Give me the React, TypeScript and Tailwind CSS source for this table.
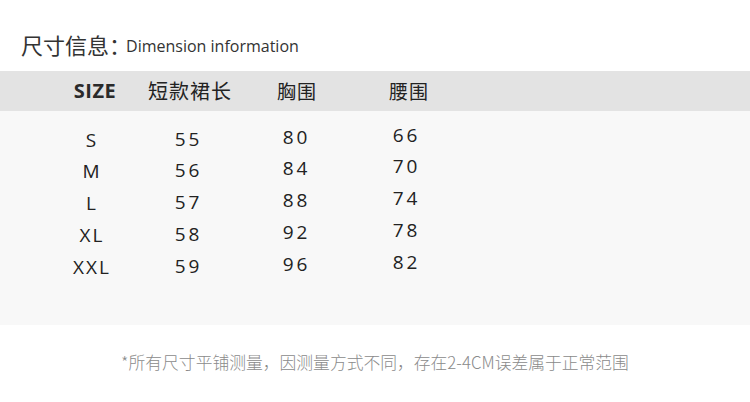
export default function App() {
  const sizes = ["S", "M", "L", "XL", "XXL"];
  const lens = ["55", "56", "57", "58", "59"];
  const chest = ["80", "84", "88", "92", "96"];
  const waist = ["66", "70", "74", "78", "82"];
  const cjk = { fontFamily: '"Noto Sans CJK SC", "Open Sans", sans-serif' };
  const latin = { fontFamily: '"Open Sans", "Noto Sans CJK SC", sans-serif' };
  return (
    <div className="w-[750px] h-[402px] bg-white overflow-hidden text-[#222]">
      <div className="h-[71px] flex items-end pl-[21px] pb-[16px]">
        <span className="text-[22px] leading-none text-[#333]" style={cjk}>尺寸信息：</span>
        <span className="text-[16px] leading-none text-[#333] -ml-[5px] pb-[1px]" style={latin}>Dimension information</span>
      </div>
      <div className="h-[40px] bg-[#e3e3e3] flex items-center pl-[55px]">
        <div className="w-[80px] text-center text-[20px] font-bold text-[#2a2a2a] tracking-[0.5px]" style={latin}>SIZE</div>
        <div className="w-[110px] text-center text-[20px] tracking-[1px]" style={cjk}>短款裙长</div>
        <div className="w-[104px] text-center text-[19px] tracking-[1px]" style={cjk}>胸围</div>
        <div className="w-[120px] text-center text-[19px] tracking-[1px]" style={cjk}>腰围</div>
      </div>
      <div className="h-[214px] bg-[#f8f8f8] flex pl-[51px] text-[19px]" style={latin}>
        <div className="w-[80px] flex flex-col pt-[13px]">
          {sizes.map((s) => (
            <div key={s} className="h-[31.75px] flex items-center justify-center tracking-[2px] pl-[2px]">{s}</div>
          ))}
        </div>
        <div className="w-[112px] flex flex-col pt-[12px]">
          {lens.map((s) => (
            <div key={s} className="h-[31.75px] flex items-center justify-center tracking-[3px] pl-[3px]">{s}</div>
          ))}
        </div>
        <div className="w-[104px] flex flex-col pt-[10px]">
          {chest.map((s) => (
            <div key={s} className="h-[31.75px] flex items-center justify-center tracking-[3px] pl-[3px]">{s}</div>
          ))}
        </div>
        <div className="w-[116px] flex flex-col pt-[8px]">
          {waist.map((s) => (
            <div key={s} className="h-[31.75px] flex items-center justify-center tracking-[3px] pl-[3px]">{s}</div>
          ))}
        </div>
      </div>
      <div className="flex justify-center pt-[25px]">
        <span className="text-[16.8px] text-[#8a8a8a] font-light" style={cjk}>*所有尺寸平铺测量，因测量方式不同，存在2-4CM误差属于正常范围</span>
      </div>
    </div>
  );
}
